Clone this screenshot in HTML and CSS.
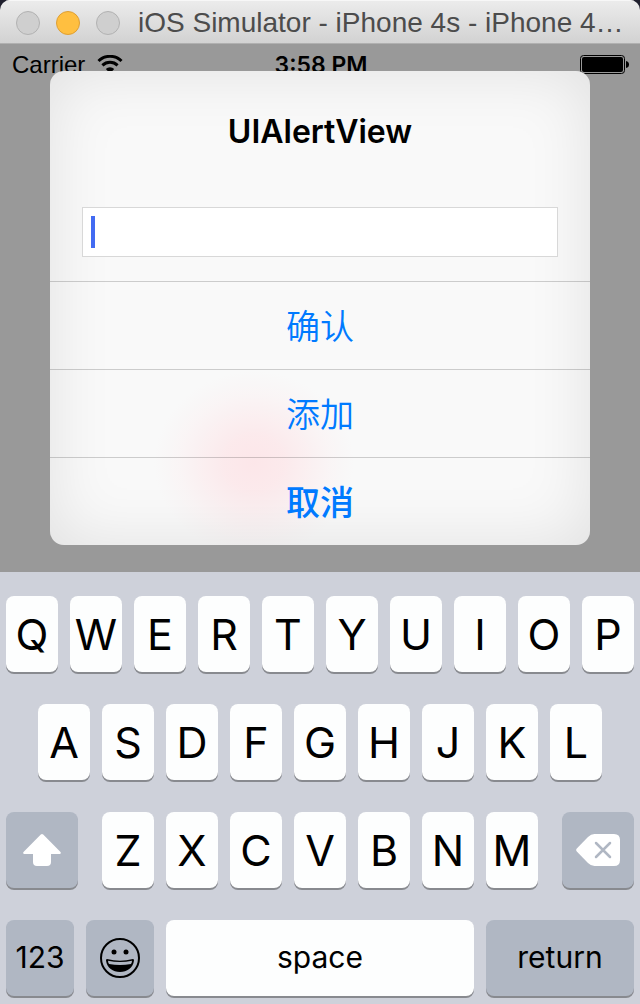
FILE: index.html
```
<!DOCTYPE html>
<html lang="en">
<head>
    <meta charset="UTF-8" />
    <meta name="viewport" content="width=device-width, initial-scale=1.0" />
    <title>iOS Simulator</title>
    <link rel="stylesheet" href="styles.css">
</head>
<body>
    <div class="window">
        <header class="title-bar">
            <button class="light" aria-label="Close"></button>
            <button class="light light-minimize" aria-label="Minimize"></button>
            <button class="light" aria-label="Zoom"></button>
            <h1>iOS Simulator - iPhone 4s - iPhone 4…</h1>
        </header>
        <main class="screen">
            <div class="status-bar">
                <div class="carrier">
                    <span>Carrier</span>
                    <svg width="26" height="20" viewBox="0 0 26 20" aria-hidden="true">
                        <path d="M1.5 6 A16.5 16.5 0 0 1 24.5 6" fill="none" stroke="#000" stroke-width="3" />
                        <path d="M5.4 10.4 A11 11 0 0 1 20.6 10.4" fill="none" stroke="#000" stroke-width="3" />
                        <path d="M13 18.5 L8.8 14 A6 6 0 0 1 17.2 14 Z" />
                    </svg>
                </div>
                <time>3:58 PM</time>
                <div class="battery">
                    <svg width="50" height="20" viewBox="0 0 50 20" aria-hidden="true">
                        <rect x="0.5" y="0.5" width="44" height="18" rx="3" fill="none" stroke="#000" />
                        <rect x="2" y="2" width="41" height="15" rx="2" />
                        <path d="M46 6 Q49 6.5 49 9.5 T46 13 Z" />
                    </svg>
                </div>
            </div>
            <div class="alert" role="dialog" aria-labelledby="alert-title">
                <div class="alert-body">
                    <h2 id="alert-title">UIAlertView</h2>
                    <div class="field">
                        <input type="text" aria-labelledby="alert-title">
                        <span class="caret"></span>
                    </div>
                </div>
                <button class="alert-button">确认</button>
                <button class="alert-button">添加</button>
                <button class="alert-button cancel">取消</button>
            </div>
        </main>
        <div class="keyboard">
            <div class="row">
                <button class="key">Q</button>
                <button class="key">W</button>
                <button class="key">E</button>
                <button class="key">R</button>
                <button class="key">T</button>
                <button class="key">Y</button>
                <button class="key">U</button>
                <button class="key">I</button>
                <button class="key">O</button>
                <button class="key">P</button>
            </div>
            <div class="row row-inset">
                <button class="key">A</button>
                <button class="key">S</button>
                <button class="key">D</button>
                <button class="key">F</button>
                <button class="key">G</button>
                <button class="key">H</button>
                <button class="key">J</button>
                <button class="key">K</button>
                <button class="key">L</button>
            </div>
            <div class="row">
                <button class="key dark shift" aria-label="Shift">
                    <svg width="38" height="32" viewBox="0 0 38 32" aria-hidden="true">
                        <path d="M17.8 0.6 Q19 -0.5 20.2 0.6 L37.5 18 Q38.5 19.8 36.5 20 H28 V28 Q28 32 24 32 H14 Q10 32 10 28 V20 H1.5 Q-0.5 19.8 0.5 18 Z" fill="#fff" />
                    </svg>
                </button>
                <button class="key">Z</button>
                <button class="key">X</button>
                <button class="key">C</button>
                <button class="key">V</button>
                <button class="key">B</button>
                <button class="key">N</button>
                <button class="key">M</button>
                <button class="key dark delete" aria-label="Delete">
                    <svg width="44" height="32" viewBox="0 0 44 32" aria-hidden="true">
                        <path d="M0.8 14.5 L12 3 Q15 0 18.5 0 H38 Q44 0 44 6 V26 Q44 32 38 32 H18.5 Q15 32 12 29 L0.8 17.5 Q-0.5 16 0.8 14.5 Z" fill="#fff" />
                        <path d="M20 9 L34 23 M34 9 L20 23" stroke="#b0b7c3" stroke-width="2.5" stroke-linecap="round" />
                    </svg>
                </button>
            </div>
            <div class="row">
                <button class="key dark label mode">123</button>
                <button class="key dark mode" aria-label="Emoji">
                    <svg width="40" height="40" viewBox="0 0 40 40" aria-hidden="true">
                        <circle cx="20" cy="20" r="19" fill="none" stroke="#000" stroke-width="2" />
                        <circle cx="14" cy="14" r="2.5" />
                        <circle cx="26" cy="14" r="2.5" />
                        <path d="M7 21 Q20 24.5 33 21 Q34.2 21 34 22.5 C33 30 27 34 20 34 C13 34 7 30 6 22.5 Q5.8 21 7 21 Z" />
                        <path d="M8 22.7 Q20 25.5 32 22.7 Q32 24.5 31 26 Q20 28 9 26 Q8 24.5 8 22.7 Z" fill="#b0b7c3" />
                    </svg>
                </button>
                <button class="key label space">space</button>
                <button class="key dark label return">return</button>
            </div>
        </div>
    </div>
</body>
</html>
```
FILE: styles.css
```
* {
    box-sizing: border-box;
}
body {
    margin: 0;
    background-color: #20202e;
    color: #000;
    font-family: "Liberation Sans", "Noto Sans CJK SC", sans-serif;
}
button {
    margin: 0;
    padding: 0;
    border: none;
    color: inherit;
    font-family: inherit;
    cursor: pointer;
}
svg {
    display: block;
}
.window {
    display: flex;
    flex-direction: column;
    min-height: 100vh;
    border-radius: 10px 10px 0 0;
    overflow: hidden;
}

.title-bar {
    display: flex;
    align-items: center;
    gap: 16px;
    height: 44px;
    padding: 2px 8px 0 16px;
    background: linear-gradient(#ececec, #d2d2d2);
    border-bottom: 1px solid #b0b0b0;
    box-shadow: inset 0 1px 0 #f7f7f7;
}
.title-bar h1 {
    flex: 1;
    min-width: 0;
    margin: 0 0 0 2px;
    overflow: hidden;
    color: #4c4c4c;
    font-size: 28px;
    font-weight: 400;
    line-height: 32px;
    text-overflow: ellipsis;
    white-space: nowrap;
}
.light {
    flex: none;
    width: 24px;
    height: 24px;
    border: 1px solid #b2b2b2;
    border-radius: 50%;
    background-color: #cfcfcf;
}
.light-minimize {
    border-color: #de9f34;
    background-color: #ffbf40;
}

/* status bar and alert share one cell, the alert lies on top */
.screen {
    display: grid;
    flex: 1;
    background-color: #999;
}
.status-bar {
    display: grid;
    grid-area: 1 / 1;
    grid-template-columns: 1fr auto 1fr;
    align-items: center;
    align-self: start;
    height: 42px;
    padding: 0 10px 0 12px;
    font-size: 24px;
}
.status-bar time {
    font-family: Inter, sans-serif;
    font-size: 23px;
    font-weight: 600;
}
.carrier {
    display: flex;
    align-items: center;
    gap: 12px;
}
.battery {
    justify-self: end;
}

.alert {
    display: flex;
    flex-direction: column;
    grid-area: 1 / 1;
    align-self: center;
    margin: 27px 50px;
    overflow: hidden;
    border-radius: 14px;
    background:
        radial-gradient(ellipse 100px 92px at 204px 392px, rgba(255, 215, 220, 0.55), rgba(255, 215, 220, 0.45) 30%, rgba(255, 215, 220, 0.12) 75%, rgba(255, 215, 220, 0)),
        #f9f9f9;
    box-shadow: inset 0 0 64px rgba(0, 0, 0, 0.1);
}
.alert-body {
    padding: 41px 32px 24px;
}
.alert-body h2 {
    margin: 0 0 55px;
    font-family: Inter, sans-serif;
    font-size: 32px;
    font-weight: 600;
    line-height: 40px;
    text-align: center;
}
.field {
    position: relative;
}
.field input {
    display: block;
    width: 100%;
    height: 50px;
    padding: 0 8px;
    border: 1px solid #d8d8d8;
    border-radius: 0;
    outline: none;
    background-color: #fff;
    caret-color: transparent;
    font-family: inherit;
    font-size: 26px;
}
.caret {
    position: absolute;
    top: 9px;
    left: 9px;
    width: 4px;
    height: 32px;
    background-color: #426bf2;
}
.alert-button {
    height: 88px;
    padding-bottom: 2px;
    border-top: 1px solid rgba(0, 0, 0, 0.18);
    background: none;
    color: #007aff;
    font-family: "Noto Sans CJK SC", sans-serif;
    font-size: 34px;
    font-weight: 350;
    line-height: 40px;
}
.alert-button.cancel {
    font-weight: 500;
}

.keyboard {
    display: flex;
    flex-direction: column;
    gap: 32px;
    padding: 24px 6px 8px;
    background-color: #ced1da;
}
.row {
    display: flex;
    gap: 12px;
}
.row-inset {
    padding: 0 32px;
}
.key {
    display: flex;
    flex: 52 1 0;
    align-items: center;
    justify-content: center;
    min-width: 0;
    height: 76px;
    border-radius: 8px;
    background-color: #fdfefe;
    box-shadow: 0 2px 0 #888a8f;
    font-family: Inter, sans-serif;
    font-size: 43px;
    font-weight: 400;
    line-height: 48px;
}
.key.dark {
    background-color: #b0b7c3;
}
.key.label {
    padding-bottom: 2px;
    font-size: 30px;
}
.shift,
.delete {
    flex-grow: 72;
}
.shift {
    margin-right: 12px;
}
.delete {
    margin-left: 12px;
}
.mode {
    flex-grow: 68;
}
.space {
    flex-grow: 308;
}
.return {
    flex-grow: 148;
}
```
